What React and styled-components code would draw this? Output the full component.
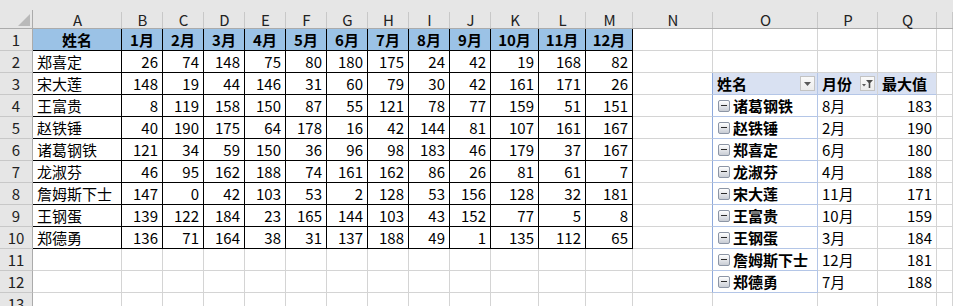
import React from "react";
import styled, { createGlobalStyle } from "styled-components";

const GlobalStyle = createGlobalStyle`
  body {
    margin: 0;
    background: #fff;
    font-family: "Noto Sans CJK SC", "Microsoft YaHei", sans-serif;
  }
`;

const Window = styled.div`
  width: 953px;
  height: 306px;
  overflow: hidden;
  background: #e6e6e6;
  padding-top: 10px;
  box-sizing: border-box;
`;

const Sheet = styled.div`
  display: grid;
  grid-template-columns: 33px 89px repeat(9, 41px) 48px 47px 47px 80px 105px 60px 59px 1fr;
  grid-template-rows: 19px repeat(13, 22px);
  font-size: 15px;
  color: #000;
  background: #fff;
`;

const Corner = styled.div`
  position: relative;
  background: #e6e6e6;
  border-right: 1px solid #ababab;
  border-bottom: 1px solid #ababab;
  box-sizing: border-box;

  &::after {
    content: "";
    position: absolute;
    right: 2px;
    bottom: 2px;
    width: 0;
    height: 0;
    border-left: 12px solid transparent;
    border-bottom: 12px solid #b9b9b9;
  }
`;

const ColHeader = styled.div`
  position: relative;
  background: #e6e6e6;
  border-bottom: 1px solid #ababab;
  box-sizing: border-box;
  display: flex;
  align-items: center;
  justify-content: center;
  font-size: 15px;
  color: #222;
  line-height: 1;
  padding-top: 1px;

  &::after {
    content: "";
    position: absolute;
    right: 0;
    top: 2px;
    bottom: 0;
    width: 1px;
    background: #c8c8c8;
  }
`;

const RowHeader = styled.div`
  background: #e6e6e6;
  border-right: 1px solid #ababab;
  border-bottom: 1px solid #c8c8c8;
  box-sizing: border-box;
  display: flex;
  align-items: center;
  justify-content: center;
  color: #222;
  line-height: 1;
`;

const Cell = styled.div`
  box-sizing: border-box;
  border-right: 1px solid ${(p) => p.$right || "#d4d4d4"};
  border-bottom: 1px solid ${(p) => p.$bottom || "#d4d4d4"};
  background: ${(p) => p.$bg || "#fff"};
  display: flex;
  align-items: center;
  justify-content: ${(p) =>
    p.$align === "right" ? "flex-end" : p.$align === "center" ? "center" : "flex-start"};
  padding: 0 4px;
  font-weight: ${(p) => (p.$bold ? 700 : 400)};
  white-space: nowrap;
  overflow: hidden;
  line-height: 1;
`;

const TableCell = styled(Cell).attrs({ $right: "#000", $bottom: "#000" })``;

const PivotHead = styled(Cell).attrs({ $bg: "#d9e1f2", $bottom: "#b4c6e7" })`
  justify-content: space-between;
  padding-right: 2px;
`;

const NameWrap = styled.span`
  display: flex;
  align-items: center;
  gap: 3px;
  font-weight: 700;
`;

const Expander = styled.span`
  position: relative;
  flex: none;
  width: 10px;
  height: 10px;
  margin-left: 1px;
  border: 1px solid #8c95a5;
  border-radius: 2px;
  background: linear-gradient(#ffffff, #c9cdd5);

  &::after {
    content: "";
    position: absolute;
    left: 2px;
    right: 2px;
    top: 4px;
    height: 1px;
    background: #2b2b2b;
  }
`;

const FilterButton = styled.span`
  width: 13px;
  height: 13px;
  border: 1px solid #c3c3c3;
  background: linear-gradient(#fafafa, #ececec);
  display: flex;
  align-items: center;
  justify-content: center;
`;

const Dropdown = () => (
  <FilterButton>
    <svg width="7" height="4" viewBox="0 0 7 4">
      <path d="M0 0h7L3.5 4z" fill="#5a5a5a" />
    </svg>
  </FilterButton>
);

const FilterIcon = () => (
  <FilterButton>
    <svg width="11" height="9" viewBox="0 0 11 9">
      <path d="M0 5h4L2 7.5z" fill="#5a5a5a" />
      <path d="M4 1h7L8.3 4v5H6.7V4z" fill="#4a4a4a" />
    </svg>
  </FilterButton>
);

const COLS = ["A", "B", "C", "D", "E", "F", "G", "H", "I", "J", "K", "L", "M", "N", "O", "P", "Q", ""];

const MONTHS = ["1月", "2月", "3月", "4月", "5月", "6月", "7月", "8月", "9月", "10月", "11月", "12月"];

const DATA = [
  ["郑喜定", 26, 74, 148, 75, 80, 180, 175, 24, 42, 19, 168, 82],
  ["宋大莲", 148, 19, 44, 146, 31, 60, 79, 30, 42, 161, 171, 26],
  ["王富贵", 8, 119, 158, 150, 87, 55, 121, 78, 77, 159, 51, 151],
  ["赵铁锤", 40, 190, 175, 64, 178, 16, 42, 144, 81, 107, 161, 167],
  ["诸葛钢铁", 121, 34, 59, 150, 36, 96, 98, 183, 46, 179, 37, 167],
  ["龙淑芬", 46, 95, 162, 188, 74, 161, 162, 86, 26, 81, 61, 7],
  ["詹姆斯下士", 147, 0, 42, 103, 53, 2, 128, 53, 156, 128, 32, 181],
  ["王钢蛋", 139, 122, 184, 23, 165, 144, 103, 43, 152, 77, 5, 8],
  ["郑德勇", 136, 71, 164, 38, 31, 137, 188, 49, 1, 135, 112, 65],
];

const PIVOT = [
  ["诸葛钢铁", "8月", 183],
  ["赵铁锤", "2月", 190],
  ["郑喜定", "6月", 180],
  ["龙淑芬", "4月", 188],
  ["宋大莲", "11月", 171],
  ["王富贵", "10月", 159],
  ["王钢蛋", "3月", 184],
  ["詹姆斯下士", "12月", 181],
  ["郑德勇", "7月", 188],
];

const PIVOT_LINE = "#b4c6e7";

function renderCell(r, c) {
  const key = `${r}-${c}`;

  // main table A1:M10
  if (r <= 10 && c <= 12) {
    if (r === 1) {
      return (
        <TableCell key={key} $bg="#9bc2e6" $bold $align="center">
          {c === 0 ? "姓名" : MONTHS[c - 1]}
        </TableCell>
      );
    }
    const v = DATA[r - 2][c];
    return (
      <TableCell key={key} $align={c === 0 ? "left" : "right"}>
        {v}
      </TableCell>
    );
  }

  // column N borders the pivot table
  if (c === 13) {
    return <Cell key={key} $right={r >= 3 && r <= 12 ? "#8ea9db" : undefined} />;
  }

  // pivot table O3:Q12
  if (r === 3 && c >= 14 && c <= 16) {
    if (c === 14)
      return (
        <PivotHead key={key} $right={PIVOT_LINE} $bold>
          <span>姓名</span>
          <Dropdown />
        </PivotHead>
      );
    if (c === 15)
      return (
        <PivotHead key={key} $bold>
          <span>月份</span>
          <FilterIcon />
        </PivotHead>
      );
    return (
      <PivotHead key={key} $bold>
        <span>最大值</span>
      </PivotHead>
    );
  }
  if (r >= 4 && r <= 12 && c >= 14 && c <= 16) {
    const row = PIVOT[r - 4];
    if (c === 14)
      return (
        <Cell key={key} $right={PIVOT_LINE} $bottom={PIVOT_LINE}>
          <NameWrap>
            <Expander />
            {row[0]}
          </NameWrap>
        </Cell>
      );
    if (c === 15) return <Cell key={key}>{row[1]}</Cell>;
    return (
      <Cell key={key} $align="right">
        {row[2]}
      </Cell>
    );
  }

  return <Cell key={key} />;
}

export default function App() {
  const rows = [];
  for (let r = 1; r <= 13; r++) {
    rows.push(<RowHeader key={`h${r}`}>{r}</RowHeader>);
    for (let c = 0; c < 18; c++) rows.push(renderCell(r, c));
  }

  return (
    <>
      <GlobalStyle />
      <Window>
        <Sheet>
          <Corner />
          {COLS.map((name, i) => (
            <ColHeader key={`c${i}`}>{name}</ColHeader>
          ))}
          {rows}
        </Sheet>
      </Window>
    </>
  );
}
